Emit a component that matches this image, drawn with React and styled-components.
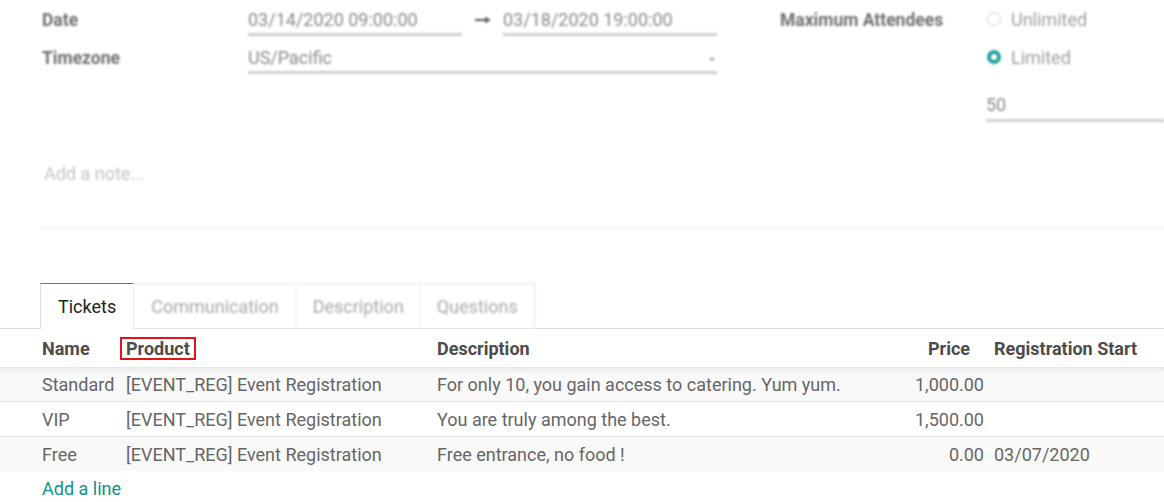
import styled, { createGlobalStyle } from "styled-components";

const GlobalStyle = createGlobalStyle`
  html, body {
    margin: 0;
    padding: 0;
    background: #fff;
  }
  body {
    font-family: Roboto, "Noto Sans", Arial, sans-serif;
    color: #666;
  }
`;

const Page = styled.div`
  width: 1164px;
  height: 502px;
  overflow: hidden;
  background: #fff;
`;

// top part of the form is blurred in the screenshot
const Blurred = styled.div`
  filter: blur(1.2px);
`;

const FormGrid = styled.div`
  display: grid;
  grid-template-columns: 206px 532px 206px 1fr;
  padding-left: 42px;
`;

const Label = styled.div`
  font-size: 17.5px;
  font-weight: 700;
  color: #707070;
  height: 38px;
  line-height: 40px;
`;

const FieldCell = styled.div`
  display: flex;
  align-items: flex-start;
  height: 38px;
`;

const Input = styled.div`
  position: relative;
  width: ${(p) => p.$width || "214px"};
  height: 33px;
  line-height: 40px;
  font-size: 18px;
  color: #8a8a8a;
  border-bottom: 3px solid #cfcfcf;
  box-sizing: content-box;
`;

const Caret = styled.span`
  position: absolute;
  right: 2px;
  top: 20px;
  width: 0;
  height: 0;
  border-left: 3px solid transparent;
  border-right: 3px solid transparent;
  border-top: 3px solid #999;
`;

const Arrow = styled.span`
  width: 41px;
  height: 40px;
  display: flex;
  align-items: center;
  justify-content: center;
`;

const RadioRow = styled.label`
  display: flex;
  align-items: center;
  gap: 10px;
  height: 38px;
  font-size: 18px;
  color: #a0a0a0;
  padding-left: 1px;
`;

const RadioDot = styled.span`
  width: 14px;
  height: 14px;
  border-radius: 50%;
  box-sizing: border-box;
  border: ${(p) => (p.$checked ? "4.5px solid #21a09c" : "1px solid #ccc")};
  background: #fff;
`;

const NumberInput = styled.div`
  height: 31px;
  margin-top: 12px;
  line-height: 34px;
  font-size: 18px;
  color: #8a8a8a;
  border-bottom: 3px solid #cfcfcf;
`;

const Note = styled.div`
  margin: 40px 0 0 40px;
  height: 65px;
  padding-left: 4px;
  font-size: 18px;
  color: #c4c4c4;
  line-height: 24px;
  border-bottom: 1px solid #e6e6e6;
`;

const Tabs = styled.div`
  display: flex;
  margin-top: 55px;
  padding-left: 40px;
  border-bottom: 1px solid #dcdcdc;
`;

const Tab = styled.div`
  padding: 0 ${(p) => p.$pad || "16px"};
  display: flex;
  align-items: center;
  font-size: 18px;
  color: ${(p) => (p.$active ? "#222" : "#a9a9a9")};
  background: #fff;
  border: 1px solid #e3e3e3;
  border-left: ${(p) => (p.$first ? "1px solid #dcdcdc" : "none")};
  border-top: 1px solid ${(p) => (p.$active ? "#7d6a7c" : "#e3e3e3")};
  border-bottom: none;
  margin-bottom: ${(p) => (p.$active ? "-1px" : "0")};
  height: ${(p) => (p.$active ? "46px" : "45px")};
  box-sizing: border-box;
  ${(p) => (p.$active ? "" : "filter: blur(1.2px);")}
`;

const Table = styled.table`
  width: 1164px;
  border-collapse: collapse;
  table-layout: fixed;
  font-size: 18px;
`;

const Th = styled.th`
  height: 38px;
  padding: 0 ${(p) => p.$padRight || "6px"} 0 ${(p) => p.$padLeft || "6px"};
  text-align: ${(p) => p.$align || "left"};
  font-weight: 700;
  color: #4c4c4c;
  white-space: nowrap;
`;

const Row = styled.tr`
  background: ${(p) => (p.$striped ? "#f9f9f9" : "#fff")};
  border-top: 1px solid #dee2e6;
  &:first-child {
    border-top: none;
  }
  &:first-child td {
    box-shadow: inset 0 7px 6px -6px rgba(0, 0, 0, 0.12);
  }
`;

const Td = styled.td`
  height: 34px;
  padding: 0 ${(p) => p.$padRight || "6px"} 0 ${(p) => p.$padLeft || "6px"};
  text-align: ${(p) => p.$align || "left"};
  color: #666;
  white-space: nowrap;
`;

const Highlight = styled.span`
  display: inline-block;
  border: 2px solid #e3121b;
  padding: 0 4px;
  margin-left: -6px;
  line-height: 19px;
`;

const AddLine = styled.a`
  display: block;
  padding-left: 42px;
  margin-top: 7px;
  font-size: 18px;
  color: #0e928e;
  text-decoration: none;
`;

const tickets = [
  {
    name: "Standard",
    product: "[EVENT_REG] Event Registration",
    description: "For only 10, you gain access to catering. Yum yum.",
    price: "1,000.00",
    start: "",
  },
  {
    name: "VIP",
    product: "[EVENT_REG] Event Registration",
    description: "You are truly among the best.",
    price: "1,500.00",
    start: "",
  },
  {
    name: "Free",
    product: "[EVENT_REG] Event Registration",
    description: "Free entrance, no food !",
    price: "0.00",
    start: "03/07/2020",
  },
];

function App() {
  return (
    <Page>
      <GlobalStyle />
      <Blurred>
        <FormGrid>
          <Label>Date</Label>
          <FieldCell>
            <Input>03/14/2020 09:00:00</Input>
            <Arrow>
              <svg width="18" height="10" viewBox="0 0 18 10">
                <path d="M1 5h11" stroke="#666" strokeWidth="2.2" />
                <path d="M11 1.5L17 5l-6 3.5z" fill="#666" />
              </svg>
            </Arrow>
            <Input>03/18/2020 19:00:00</Input>
          </FieldCell>
          <Label>Maximum Attendees</Label>
          <RadioRow>
            <RadioDot />
            Unlimited
          </RadioRow>

          <Label>Timezone</Label>
          <FieldCell>
            <Input $width="469px">
              US/Pacific
              <Caret />
            </Input>
          </FieldCell>
          <div />
          <RadioRow>
            <RadioDot $checked />
            Limited
          </RadioRow>

          <div />
          <div />
          <div />
          <NumberInput>50</NumberInput>
        </FormGrid>
        <Note>Add a note...</Note>
      </Blurred>

      <Tabs>
        <Tab $active $first $pad="17px">Tickets</Tab>
        <Tab $pad="17px">Communication</Tab>
        <Tab>Description</Tab>
        <Tab>Questions</Tab>
      </Tabs>

      <Table>
        <colgroup>
          <col style={{ width: 120 }} />
          <col style={{ width: 311 }} />
          <col style={{ width: 439 }} />
          <col style={{ width: 118 }} />
          <col style={{ width: 176 }} />
        </colgroup>
        <thead>
          <tr>
            <Th $padLeft="42px">Name</Th>
            <Th>
              <Highlight>Product</Highlight>
            </Th>
            <Th>Description</Th>
            <Th $align="right" $padRight="18px">
              Price
            </Th>
            <Th>Registration Start</Th>
          </tr>
        </thead>
        <tbody>
          {tickets.map((t, i) => (
            <Row key={t.name} $striped={i % 2 === 0}>
              <Td $padLeft="42px">{t.name}</Td>
              <Td>{t.product}</Td>
              <Td>{t.description}</Td>
              <Td $align="right" $padRight="4px">
                {t.price}
              </Td>
              <Td>{t.start}</Td>
            </Row>
          ))}
        </tbody>
      </Table>
      <AddLine href="#">Add a line</AddLine>
    </Page>
  );
}

export default App;
